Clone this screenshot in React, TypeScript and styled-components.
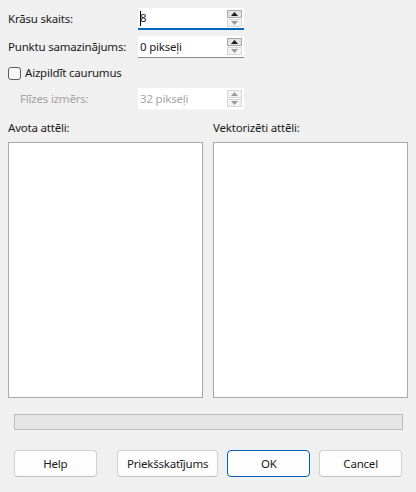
import styled, { createGlobalStyle } from "styled-components";

const GlobalStyle = createGlobalStyle`
  html, body {
    margin: 0;
    padding: 0;
    background: #f0f0f0;
  }
  body {
    font-family: "Noto Sans", "Open Sans", sans-serif;
    font-size: 11.5px;
    letter-spacing: -0.2px;
    line-height: 16px;
    color: #1a1a1a;
  }
`;

const Dialog = styled.div`
  width: 416px;
  height: 492px;
  box-sizing: border-box;
  padding: 8px 9px 0 8px;
  display: flex;
  flex-direction: column;
`;

const Form = styled.div`
  display: grid;
  grid-template-columns: 130px 106px;
  row-gap: 6px;
  align-items: center;
`;

const Label = styled.span<{ $disabled?: boolean; $indent?: boolean }>`
  color: ${(p) => (p.$disabled ? "#a3a3a3" : "#1a1a1a")};
  padding-left: ${(p) => (p.$indent ? "12px" : "0")};
  white-space: nowrap;
`;

const Spin = styled.div<{ $state: "focus" | "normal" | "disabled" }>`
  height: 22px;
  box-sizing: border-box;
  background: #ffffff;
  display: flex;
  align-items: center;
  padding-left: 2px;
  padding-right: 2px;
  border-bottom: ${(p) =>
    p.$state === "focus"
      ? "2px solid #0067c0"
      : p.$state === "normal"
      ? "1px solid #8a8a8a"
      : "1px solid #f7f7f7"};
  color: ${(p) => (p.$state === "disabled" ? "#a6a6a6" : "#1a1a1a")};
`;

const SpinText = styled.div`
  flex: 1;
  display: flex;
  align-items: center;
  white-space: nowrap;
`;

const Caret = styled.span`
  display: inline-block;
  width: 1px;
  height: 15px;
  background: #000;
  margin-right: -1px;
`;

const Arrows = styled.div`
  display: flex;
  flex-direction: column;
  gap: 1px;
  width: 15px;
`;

const Arrow = styled.div<{ $active?: boolean; $dim?: boolean }>`
  height: 8px;
  box-sizing: border-box;
  border: 1px solid ${(p) => (p.$active ? "#a8a8a8" : "#d6d6d6")};
  background: ${(p) => (p.$active ? "#e3e3e3" : "#f3f3f3")};
  display: flex;
  align-items: center;
  justify-content: center;
  svg {
    fill: ${(p) => (p.$dim ? "#9a9a9a" : "#1a1a1a")};
  }
`;

const CheckRow = styled.label`
  grid-column: 1 / span 2;
  display: flex;
  align-items: center;
  gap: 4px;
  height: 22px;
  margin: -2px 0;
`;

const Box = styled.span`
  width: 13px;
  height: 13px;
  box-sizing: border-box;
  border: 1px solid #5c5c5c;
  border-radius: 3px;
  background: #f8f8f8;
`;

const Panes = styled.div`
  margin-top: 10px;
  display: grid;
  grid-template-columns: 195px 195px;
  column-gap: 10px;
`;

const Pane = styled.div`
  display: flex;
  flex-direction: column;
  gap: 6px;
`;

const ImageList = styled.div`
  height: 256px;
  box-sizing: border-box;
  background: #ffffff;
  border: 1px solid #a8a8a8;
`;

const Progress = styled.div`
  margin: 16px 4px 0 6px;
  height: 16px;
  box-sizing: border-box;
  background: #e6e6e6;
  border: 1px solid #bcbcbc;
`;

const Buttons = styled.div`
  margin: 20px 5px 0 6px;
  display: flex;
  gap: 9px;
`;

const Button = styled.button<{ $w: number; $primary?: boolean; $gap?: number }>`
  width: ${(p) => p.$w}px;
  height: 27px;
  margin-right: ${(p) => p.$gap ?? 0}px;
  font-family: inherit;
  font-size: 11.5px;
  letter-spacing: -0.2px;
  color: #1a1a1a;
  background: #fdfdfd;
  border: 1px solid ${(p) => (p.$primary ? "#005fb8" : "#d0d0d0")};
  border-bottom-color: ${(p) => (p.$primary ? "#005fb8" : "#bdbdbd")};
  border-radius: 4px;
  padding: 0;
`;

const Up = () => (
  <svg width="7" height="4" viewBox="0 0 7 4">
    <path d="M0 4 L3.5 0 L7 4 Z" />
  </svg>
);

const Down = () => (
  <svg width="7" height="4" viewBox="0 0 7 4">
    <path d="M0 0 L7 0 L3.5 4 Z" />
  </svg>
);

const SpinBox = ({
  value,
  state,
  caret,
}: {
  value: string;
  state: "focus" | "normal" | "disabled";
  caret?: boolean;
}) => (
  <Spin $state={state}>
    <SpinText>
      {caret && <Caret />}
      {value}
    </SpinText>
    <Arrows>
      <Arrow $active={state !== "disabled"} $dim={state === "disabled"}>
        <Up />
      </Arrow>
      <Arrow $dim>
        <Down />
      </Arrow>
    </Arrows>
  </Spin>
);

export default function App() {
  return (
    <>
      <GlobalStyle />
      <Dialog>
        <Form>
          <Label>Krāsu skaits:</Label>
          <SpinBox value="8" state="focus" caret />
          <Label>Punktu samazinājums:</Label>
          <SpinBox value="0 pikseļi" state="normal" />
          <CheckRow>
            <Box />
            Aizpildīt caurumus
          </CheckRow>
          <Label $disabled $indent>
            Flīzes izmērs:
          </Label>
          <SpinBox value="32 pikseļi" state="disabled" />
        </Form>
        <Panes>
          <Pane>
            <Label>Avota attēli:</Label>
            <ImageList />
          </Pane>
          <Pane>
            <Label>Vektorizēti attēli:</Label>
            <ImageList />
          </Pane>
        </Panes>
        <Progress />
        <Buttons>
          <Button $w={83} $gap={11}>Help</Button>
          <Button $w={102}>Priekšskatījums</Button>
          <Button $w={83} $primary>OK</Button>
          <Button $w={83}>Cancel</Button>
        </Buttons>
      </Dialog>
    </>
  );
}
